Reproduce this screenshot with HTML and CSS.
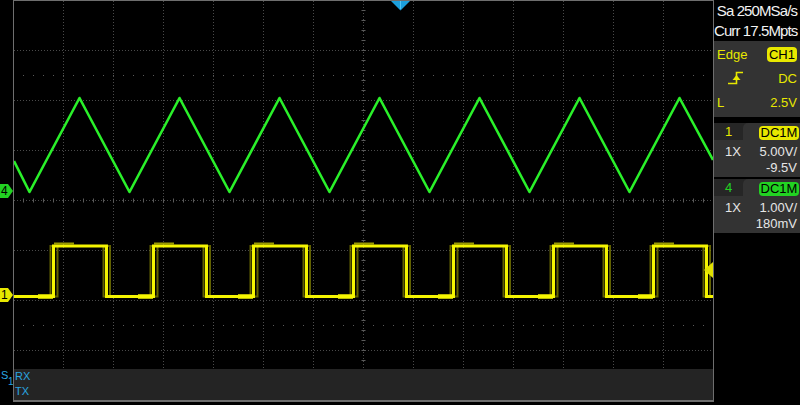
FILE: index.html
```html
<!DOCTYPE html>
<html>
<head>
<meta charset="utf-8">
<title>Oscilloscope</title>
<link rel="stylesheet" href="styles.css">
</head>
<body>
<div class="scope">
  <div class="gutter">
    <div class="marker marker-4">4</div>
    <div class="marker marker-1">1</div>
    <div class="serial">S</div>
    <div class="serial-sub">1</div>
  </div>

  <div class="screen">
    <svg class="plot" viewBox="14 1 699 368" width="699" height="368">
      <g class="grid">
        <path d="M63.5 1V369M113.5 1V369M163.5 1V369M213.5 1V369M263.5 1V369M313.5 1V369M363.5 1V369M413.5 1V369M463.5 1V369M513.5 1V369M563.5 1V369M613.5 1V369M663.5 1V369"/>
        <path d="M14 50.5H713M14 100.5H713M14 150.5H713M14 200.5H713M14 250.5H713M14 300.5H713M14 350.5H713"/>
      </g>
      <path class="dots" d="M23 75.5H713M23 325.5H713"/>
      <path class="ticks-h" d="M23 200.5H713"/>
      <path class="ticks-v" d="M363.5 10V369"/>

      <path class="sq-smear" d="M14 296.5H50.5V246H103.5V296.5H150.5V246H203.5V296.5H250.5V246H303.5V296.5H350.5V246H403.5V296.5H450.5V246H503.5V296.5H550.5V246H603.5V296.5H650.5V246H703.5V296.5H713"/>
      <path class="sq-smear" d="M14 296.5H57.5V246H110V296.5H157.5V246H210V296.5H257.5V246H310V296.5H357.5V246H410V296.5H457.5V246H510V296.5H557.5V246H610V296.5H657.5V246H710V296.5H713"/>
      <path class="sq-over" d="M54 243.5H74M154 243.5H174M254 243.5H274M354 243.5H374M454 243.5H474M554 243.5H574M654 243.5H674"/>
      <path class="sq-low" d="M38 296.5H53M138 296.5H153M238 296.5H253M338 296.5H353M438 296.5H453M538 296.5H553M638 296.5H653"/>
      <path class="square" d="M14 296.5H53.5V246H106.5V296.5H153.5V246H206.5V296.5H253.5V246H306.5V296.5H353.5V246H406.5V296.5H453.5V246H506.5V296.5H553.5V246H606.5V296.5H653.5V246H706.5V296.5H713"/>

      <polyline class="tri" points="14,161 29.5,192 79.5,98 129.5,192 179.5,98 229.5,192 279.5,98 329.5,192 379.5,98 429.5,192 479.5,98 529.5,192 579.5,98 629.5,192 679.5,98 713,160"/>

      <polygon class="trig-level" points="704,270 713,262 713,278"/>
      <polygon class="trig-pos" points="391,1 410,1 400.5,10.5"/>
      <path class="trig-pos-line" d="M400.5 1V9"/>
    </svg>
    <div class="decode">
      <div class="decode-line">RX</div>
      <div class="decode-line">TX</div>
    </div>
  </div>

  <div class="side">
    <div class="acq">
      <div class="acq-line">Sa 250MSa/s</div>
      <div class="acq-line">Curr 17.5Mpts</div>
    </div>

    <div class="trig">
      <div class="row">
        <span class="yl">Edge</span>
        <span class="badge badge-yellow">CH1</span>
      </div>
      <div class="row">
        <svg class="edge-icon" viewBox="0 0 16 14" width="16" height="14">
          <path d="M0 12.5H8.5V1.5H15" fill="none" stroke="#e8e800" stroke-width="1.6"/>
          <polygon points="8.5,4 4.5,9 12.5,9" fill="#e8e800"/>
        </svg>
        <span class="yl">DC</span>
      </div>
      <div class="row">
        <span class="yl">L</span>
        <span class="yl">2.5V</span>
      </div>
    </div>

    <div class="ch ch-1">
      <div class="ch-head">
        <span class="ch-num num-yellow">1</span>
        <span class="ch-rest"><span class="badge badge-dc badge-yellow">DC1M</span></span>
      </div>
      <div class="ch-row"><span>1X</span><span>5.00V/</span></div>
      <div class="ch-row ch-row-end"><span>-9.5V</span></div>
    </div>

    <div class="ch ch-4">
      <div class="ch-head">
        <span class="ch-num num-green">4</span>
        <span class="ch-rest"><span class="badge badge-dc badge-green">DC1M</span></span>
      </div>
      <div class="ch-row"><span>1X</span><span>1.00V/</span></div>
      <div class="ch-row ch-row-end"><span>180mV</span></div>
    </div>
  </div>
</div>
</body>
</html>
```

FILE: styles.css
```css
html, body {
  margin: 0;
  padding: 0;
  background: #000;
}

body {
  width: 800px;
  height: 405px;
  overflow: hidden;
  font-family: "Liberation Sans", Arial, sans-serif;
}

.scope {
  display: flex;
  align-items: flex-start;
  height: 405px;
}

/* left gutter with channel markers */
.gutter {
  position: relative;
  width: 13px;
  height: 405px;
  flex: none;
}

.marker {
  position: absolute;
  left: 0;
  width: 13px;
  height: 14px;
  font-size: 12px;
  line-height: 14px;
  color: #000;
  padding-left: 1px;
  box-sizing: border-box;
  clip-path: polygon(0 0, 8px 0, 13px 50%, 8px 100%, 0 100%);
}

.marker-4 {
  top: 184px;
  background: #22d322;
}

.marker-1 {
  top: 288px;
  background: #e8e800;
}

.serial,
.serial-sub {
  position: absolute;
  font-size: 11px;
  line-height: 11px;
  color: #2aa6e0;
}

.serial {
  left: 1px;
  top: 370px;
}

.serial-sub {
  left: 8px;
  top: 377px;
  font-size: 10px;
  line-height: 10px;
}

/* scope screen */
.screen {
  width: 699px;
  flex: none;
  border: 1px solid #6e6e6e;
  border-bottom-width: 2px;
  background: #000;
}

.plot {
  display: block;
}

.grid {
  fill: none;
  stroke: #4a4a4a;
  stroke-width: 1;
  stroke-dasharray: 1 2;
}

.dots {
  fill: none;
  stroke: #5a5a5a;
  stroke-width: 1;
  stroke-dasharray: 1 9;
}

.ticks-h,
.ticks-v {
  fill: none;
  stroke: #5a5a5a;
  stroke-width: 4;
  stroke-dasharray: 1 9;
}

.tri {
  fill: none;
  stroke: #2af02a;
  stroke-width: 2.6;
  stroke-linejoin: round;
}

.square {
  fill: none;
  stroke: #f4f400;
  stroke-width: 3;
  stroke-linejoin: miter;
}

.sq-smear {
  fill: none;
  stroke: #8c8c00;
  stroke-width: 2;
  opacity: 0.7;
}

.sq-over {
  fill: none;
  stroke: #9a9a00;
  stroke-width: 2;
}

.sq-low {
  fill: none;
  stroke: #f4f400;
  stroke-width: 4.5;
}

.trig-level {
  fill: #e2e200;
}

.trig-pos {
  fill: #1c9fdc;
}

.trig-pos-line {
  stroke: #52c4f2;
  stroke-width: 1;
}

.decode {
  height: 31px;
  background: #242424;
  padding-left: 1px;
  font-size: 11px;
  line-height: 15px;
  color: #2aa6e0;
}

.decode-line {
  height: 15px;
}

/* right side panel */
.side {
  width: 86px;
  flex: none;
  display: flex;
  flex-direction: column;
  font-size: 13px;
}

.acq {
  height: 40px;
  padding-top: 1px;
  padding-right: 3px;
  text-align: right;
  color: #f2f2f2;
  font-size: 15px;
  letter-spacing: -0.9px;
  line-height: 20px;
  white-space: nowrap;
}

.trig {
  height: 76px;
  box-sizing: border-box;
  padding-top: 1px;
  background: #333;
}

.row {
  height: 24px;
  display: flex;
  align-items: center;
  justify-content: space-between;
  padding: 0 3px;
}

.yl {
  color: #e8e800;
}

.edge-icon {
  display: block;
  margin-left: 11px;
}

.badge {
  display: inline-block;
  height: 15px;
  line-height: 15px;
  padding: 0 2px;
  border-radius: 4px;
  color: #000;
  text-align: center;
}

.badge-yellow {
  background: #e8e800;
}

.badge-green {
  background: #22d322;
}

.badge-dc {
  width: 40px;
  height: 14px;
  line-height: 14px;
  padding: 0;
  border-radius: 4px;
}

.ch {
  height: 54px;
  background: #333;
  color: #e6e6e6;
}

.ch-1 {
  margin-top: 6px;
}

.ch-4 {
  margin-top: 2px;
}

.ch-head {
  display: flex;
  height: 17px;
  background: #262626;
}

.ch-num {
  width: 29px;
  text-align: center;
  line-height: 18px;
}

.num-yellow {
  color: #e8e800;
}

.num-green {
  color: #22d322;
}

.ch-rest {
  flex: 1;
  display: flex;
  justify-content: flex-end;
  align-items: flex-end;
  padding-right: 1px;
  background: #333;
  border-top-left-radius: 5px;
}

.ch-row {
  display: flex;
  justify-content: space-between;
  height: 16px;
  line-height: 16px;
  padding: 0 3px 0 11px;
}

.ch-head + .ch-row {
  margin-top: 4px;
}

.ch-row-end {
  justify-content: flex-end;
}
```
